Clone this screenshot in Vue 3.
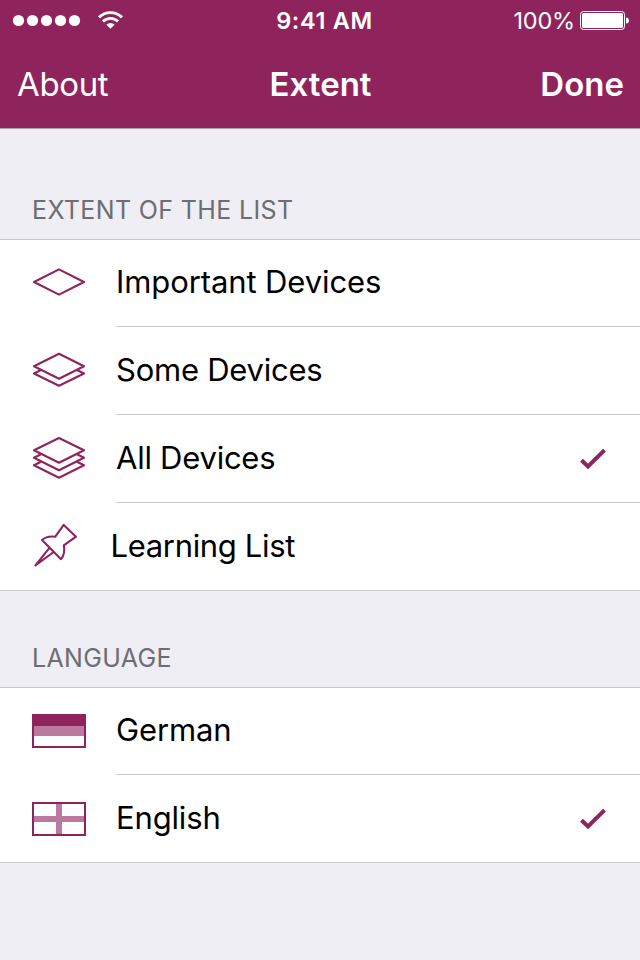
<script setup>
const groups = [
  {
    title: 'EXTENT OF THE LIST',
    rows: [
      { icon: 'one', label: 'Important Devices', cls: 'important' },
      { icon: 'two', label: 'Some Devices', cls: 'some' },
      { icon: 'three', label: 'All Devices', cls: 'all', checked: true },
      { icon: 'pin', label: 'Learning List', cls: 'learning' },
    ],
  },
  {
    title: 'LANGUAGE',
    rows: [
      { icon: 'german', label: 'German', cls: 'german' },
      { icon: 'english', label: 'English', cls: 'english', checked: true },
    ],
  },
]

const strokes = {
  one: ['M27 30.4 52 43 27 55.6 2 43Z'],
  two: ['M27 26.8 52 39.2 27 51.7 2 39.2Z', 'M9 43 2 46.5 27 58.8 52 46.5 45 43'],
  three: [
    'M27 23 52 35.3 27 47.8 2 35.3Z',
    'M9 39.3 2 42.8 27 55.3 52 42.8 45 39.3',
    'M9 46.8 2 50.3 27 62.7 52 50.3 45 46.8',
  ],
  pin: [
    'M31.7 21.9 44 33.7 31.8 42.3C33 48 32 52.5 29 56.2L10 37C13.5 33.8 18 33 23.3 33.7Z',
    'M17.7 44.7 3.4 62.4 21.7 49',
  ],
}
</script>

<template>
  <div class="screen">
    <header class="top">
      <div class="status">
        <div class="side">
          <svg class="signal" width="112" height="40" viewBox="0 0 112 40">
            <g fill="#fff">
              <circle v-for="i in 5" :key="i" :cx="4.5 + i * 14" cy="20.5" r="5.6" />
              <path d="M110.5 28.8 106.4 24.7A5.8 5.8 0 0 1 114.600 24.7Z" />
            </g>
            <g fill="none" stroke="#fff" stroke-width="2.900">
              <path d="M103 21.500A10.600 10.600 0 0 1 118 21.500" />
              <path d="M99 17.400A16.300 16.300 0 0 1 122 17.400" />
            </g>
          </svg>
        </div>
        <span class="time">9:41 AM</span>
        <div class="side right">
          <span class="percent">100%</span>
          <svg class="battery" width="50" height="20" viewBox="0 0 50 20">
            <rect x="0.500" y="1.500" width="44" height="18" rx="3" fill="none" stroke="#fff" />
            <rect x="2" y="3" width="41" height="15" rx="1.500" fill="#fff" />
            <path d="M46 7.500Q49 7.500 49 10.500T46 13.500Z" fill="#fff" />
          </svg>
        </div>
      </div>
      <nav class="nav">
        <span class="about">About</span>
        <span class="title">Extent</span>
        <span class="done">Done</span>
      </nav>
    </header>

    <section v-for="(g, n) in groups" :key="g.title">
      <h2 :class="n ? 'second' : 'first'"><span>{{ g.title }}</span></h2>
      <ul>
        <li v-for="row in g.rows" :key="row.label">
          <svg class="icon" width="54" height="88" viewBox="0 0 54 88">
            <g v-if="row.icon === 'german'">
              <rect x="1" y="28" width="52" height="32" fill="#fff" stroke="#8f245c" stroke-width="2" />
              <rect x="2" y="28" width="50" height="11" fill="#8f245c" />
              <rect x="2" y="39" width="50" height="10" fill="#bb7a9d" />
            </g>
            <g v-else-if="row.icon === 'english'">
              <path d="M2 41H52V47H2ZM24 29H30V59H24Z" fill="#bb7a9d" />
              <rect x="1" y="28" width="52" height="32" fill="none" stroke="#8f245c" stroke-width="2" />
            </g>
            <g v-else fill="none" stroke="#8f245c" stroke-width="2.100" stroke-linejoin="round">
              <path v-for="d in strokes[row.icon]" :key="d" :d="d" />
            </g>
          </svg>
          <div class="cell">
            <span class="label" :class="row.cls">{{ row.label }}</span>
            <svg v-if="row.checked" width="80" height="87" viewBox="0 0 80 87">
              <path d="M21.500 45.200 28 51.500 44.500 35.200" fill="none" stroke="#8f245c" stroke-width="4" />
            </svg>
          </div>
        </li>
      </ul>
    </section>
  </div>
</template>

<style>
body {
  background: #efeef4;
}
</style>

<style scoped>
.screen {
  width: 640px;
  height: 960px;
  overflow: hidden;
  background: #efeef4;
  font-family: Inter, 'Liberation Sans', sans-serif;
  color: #000;
  white-space: nowrap;
}
.top {
  box-sizing: border-box;
  height: 129px;
  background: #8f245c;
  border-bottom: 1px solid #a9a3a8;
  color: #fff;
}
.status {
  display: grid;
  grid-template-columns: 1fr auto 1fr;
  height: 40px;
  line-height: 41px;
  font-size: 23.5px;
}
.side {
  display: flex;
}
.signal {
  overflow: visible;
}
.right {
  justify-content: flex-end;
  align-items: flex-start;
  padding-right: 10px;
  gap: 5px;
}
.percent {
  letter-spacing: -0.2px;
}
.battery {
  margin-top: 10px;
}
.time {
  font-weight: 600;
  padding-left: 9px;
  letter-spacing: 0.65px;
}
.nav {
  display: grid;
  grid-template-columns: 1fr auto 1fr;
  height: 88px;
  padding: 0 16px 0 17px;
  line-height: 89px;
  font-size: 33px;
}
.about {
  letter-spacing: -0.35px;
}
.title,
.done {
  font-weight: 600;
}
.done {
  text-align: right;
}
h2 {
  display: flex;
  align-items: flex-end;
  box-sizing: border-box;
  margin: 0;
  padding: 0 32px 13px;
  font-size: 25px;
  font-weight: 400;
  letter-spacing: 0.36px;
  line-height: 32px;
  color: #6d6d72;
}
.first {
  height: 110px;
}
.second {
  height: 96px;
}
ul {
  margin: 0;
  padding: 0;
  list-style: none;
  background: #fff;
  box-shadow: inset 0 1px #c8c7cc;
}
li {
  display: flex;
  height: 88px;
  padding-left: 32px;
  gap: 30px;
}
li:last-child {
  box-shadow: inset 0 -1px #c8c7cc;
}
.icon {
  flex: none;
}
.cell {
  display: flex;
  flex: 1;
  justify-content: space-between;
  box-sizing: border-box;
  border-bottom: 1px solid #c8c7cc;
  line-height: 86px;
  font-size: 31px;
}
.label {
  letter-spacing: -0.25px;
}
.important {
  letter-spacing: -0.1px;
}
.german,
.english {
  letter-spacing: -0.15px;
}
.learning {
  margin-left: -5.5px;
  letter-spacing: -0.33px;
}
</style>
